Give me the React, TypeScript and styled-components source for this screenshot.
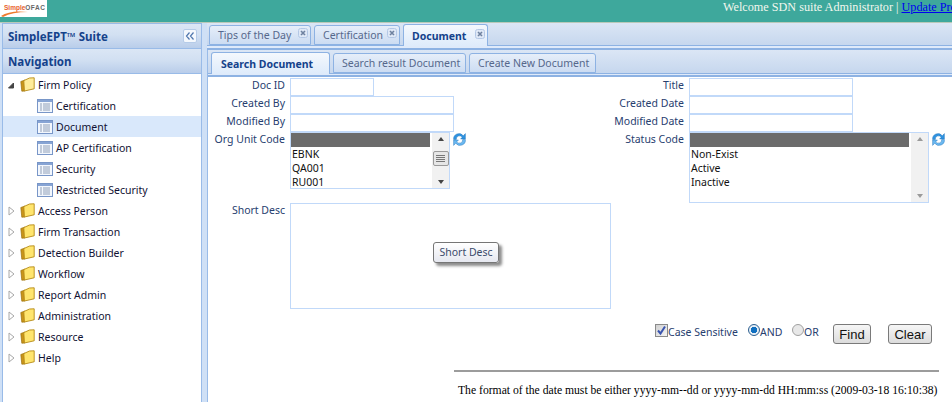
import React from 'react';
import styled, { createGlobalStyle } from 'styled-components';

const Global = createGlobalStyle`
  html, body { margin: 0; padding: 0; height: 402px; overflow: hidden; background: #fff; }
  #root { height: 402px; }
  * { box-sizing: border-box; }
`;
const ui = `"Noto Sans", "Liberation Sans", sans-serif`;

const Page = styled.div`
  width: 952px; height: 402px; display: flex; flex-direction: column; overflow: hidden;
  font-family: ${ui}; font-size: 11px; background: #cfe0f6;
`;
const Header = styled.header`
  height: 23px; flex: none; background: #3ea89c; border-bottom: 1px solid #b9c9b9;
  display: flex; align-items: flex-start; overflow: hidden;
`;
const Logo = styled.div`
  width: 47px; height: 17px; flex: none; background: #fff; position: relative; overflow: hidden;
  font-family: "Liberation Sans", sans-serif; font-size: 6.5px; font-weight: 700; line-height: 16px; padding-left: 4px; white-space: nowrap;
  color: #e8612c;
  span { color: #666; letter-spacing: 0.5px; }
`;
const Swoosh = styled.svg`position: absolute; left: 0; top: 9px; width: 30px; height: 8px;`;
const Welcome = styled.div`
  flex: none; margin-left: 676px; white-space: nowrap;
  font-family: "Liberation Serif", serif; font-size: 12.2px; line-height: 14px; color: #f2f7ee;
  a { color: #0000ee; text-decoration: underline; }
`;
const Body = styled.div`
  flex: 1; min-height: 0; display: flex; padding: 0 0 0 2px; gap: 5px;
`;
const Sidebar = styled.aside`
  width: 200px; flex: none; display: flex; flex-direction: column; background: #fff;
  border: 1px solid #99bbe8; border-bottom: 0;
`;
const PanelTitle = styled.div`
  height: 25px; flex: none; display: flex; align-items: center; justify-content: space-between; padding: 0 4px 0 5px;
  background: linear-gradient(#dbe6f5, #d2e0f2 45%, #b9cdea); border-bottom: 1px solid #99bbe8;
  font-family: ${ui}; font-weight: 700; font-size: 11.5px; color: #15428b;
`;
const Collapse = styled.button`
  width: 14px; height: 14px; padding: 0; border: 1px solid #b5cbe8; border-radius: 2px; background: #f4f8fd;
  display: flex; align-items: center; justify-content: center;
`;
const Tree = styled.ul`
  list-style: none; margin: 0; padding: 0; flex: 1; background: #fff;
`;
const TreeRow = styled.li<{ $sel?: boolean; $leaf?: boolean }>`
  height: 21px; display: flex; align-items: center; padding-left: ${p => (p.$leaf ? 34 : 5)}px; gap: 3px;
  background: ${p => (p.$sel ? '#d9e8fb' : 'transparent')};
  font-size: 10.5px; color: #111133; white-space: nowrap;
`;
const Arrow = styled.svg`width: 8px; height: 10px; flex: none; margin-right: 1px;`;
const Main = styled.main`
  flex: 1; min-width: 0; display: flex; flex-direction: column;
`;
const TabStrip = styled.div<{ $inner?: boolean }>`
  flex: none; display: flex; align-items: flex-end; gap: 3px;
  height: ${p => (p.$inner ? 24 : 23)}px; padding-left: ${p => (p.$inner ? 3 : 2)}px;
  background: linear-gradient(#dbe6f5, #c6d7ee); border-bottom: 1px solid #8db2e3;
`;
const Tab = styled.div<{ $active?: boolean; $w: number; $pad?: number }>`
  width: ${p => p.$w}px; height: ${p => (p.$active ? 22 : 20)}px; display: flex; align-items: center; justify-content: space-between;
  padding: 0 2px 0 ${p => p.$pad ?? 8}px;
  border: 1px solid #8db2e3; border-radius: 3px 3px 0 0; ${p => (p.$active ? 'border-bottom: 0; margin-bottom: -1px;' : '')}
  background: ${p => (p.$active ? 'linear-gradient(#f4f8fd, #deebfb)' : 'linear-gradient(#e6eef9, #ccdcf2)')};
  font-size: 10.5px; white-space: nowrap; color: ${p => (p.$active ? '#15428b' : '#56688c')};
  font-weight: ${p => (p.$active ? 700 : 400)};
`;
const Close = styled.svg`width: 10px; height: 10px; flex: none; margin-top: -4px;`;
const Band = styled.div<{ $h: number }>`flex: none; height: ${p => p.$h}px; background: #dfeafa; border-bottom: 2px solid #8db2e3;`;
const Content = styled.div`
  flex: 1; min-height: 0; background: #fff; border-left: 1px solid #99bbe8; display: flex; flex-direction: column;
`;
const Panel = styled.div`
  flex: 1; position: relative; padding: 1px 0 0 2px; background: #fff; color: #27406f;
`;
const FormGrid = styled.div`
  display: grid; grid-template-columns: 399px 320px;
`;
const FormCol = styled.div`display: flex; flex-direction: column;`;
const Row = styled.div<{ $h?: number }>`
  display: flex; height: ${p => p.$h ?? 18}px; align-items: flex-start; gap: 5px;
`;
const Label = styled.label`
  width: 75px; flex: none; text-align: right; font-size: 10.5px; line-height: 15px; white-space: nowrap;
`;
const Field = styled.div<{ $w: number }>`
  width: ${p => p.$w}px; height: 18px; background: #fff; border: 1px solid #c1d9f9;
`;
const ListWrap = styled.div<{ $w: number; $h: number }>`
  width: ${p => p.$w}px; height: ${p => p.$h}px; flex: none; border: 1px solid #c1d9f9; display: flex; background: #fff;
`;
const Options = styled.div`
  flex: 1; min-width: 0; font-size: 10.5px; line-height: 14px; color: #111; overflow: hidden; margin-right: 2px;
`;
const OptionBlank = styled.div`height: 14px; background: #6b6b6b;`;
const Option = styled.div`padding-left: 1px;`;
const ScrollTrack = styled.div`
  width: 17px; flex: none; background: #f1f1f1; display: flex; flex-direction: column; align-items: center; justify-content: space-between; padding: 4px 0;
`;
const ScrollThumb = styled.div`
  width: 16px; height: 15px; border: 1px solid #9a9a9a; border-radius: 2px; background: #e6e6e6; margin-bottom: 4px;
  display: flex; flex-direction: column; align-items: center; justify-content: center; gap: 1px;
  i { display: block; width: 9px; height: 1px; background: #777; }
`;
const ScrollTip = styled.span<{ $down?: boolean; $pale?: boolean }>`
  width: 0; height: 0; border-left: 3.5px solid transparent; border-right: 3.5px solid transparent;
  ${p => (p.$down ? 'border-top' : 'border-bottom')}: 4px solid ${p => (p.$pale ? '#9a9a9a' : '#444')};
`;
const Refresh = styled.svg`width: 15px; height: 15px; flex: none; margin: 0 0 0 -3px;`;
const TextArea = styled.div`
  width: 321px; height: 106px; flex: none; border: 1px solid #c1d9f9; background: #fff;
`;
const DescRow = styled(Row)`height: 106px; margin-top: 14px;`;
const Tip = styled.div`
  position: absolute; left: 225px; top: 165px; width: 66px; height: 21px; border: 1px solid #767676; border-radius: 3px;
  background: linear-gradient(#fff, #e6e8f0); box-shadow: 3px 3px 3px #8c8c8c;
  font-size: 10.5px; line-height: 18px; text-align: center; color: #3b4a6b;
`;
const Actions = styled.div`
  margin-top: 15px; display: flex; align-items: flex-start; padding-left: 445px; height: 22px;
`;
const Check = styled.span`
  width: 13px; height: 13px; flex: none; border: 1px solid #8a8a8a; background: linear-gradient(135deg, #d0d0d0, #f5f5f5);
  display: flex; align-items: center; justify-content: center;
`;
const ActionText = styled.span<{ $w: number }>`
  width: ${p => p.$w}px; flex: none; font-size: 10.5px; line-height: 17px; color: #27406f; white-space: nowrap;
`;
const Radio = styled.span<{ $on?: boolean }>`
  width: 12px; height: 12px; flex: none; border-radius: 50%; border: 1px solid ${p => (p.$on ? '#2d5f8f' : '#a0a0a0')};
  background: ${p => (p.$on ? 'radial-gradient(circle, #0f6fc0 0 3px, #e6eef6 3.5px)' : '#e8e8e8')};
`;
const Btn = styled.button<{ $w: number; $ml: number }>`
  width: ${p => p.$w}px; margin-left: ${p => p.$ml}px; height: 20px; flex: none; padding: 0;
  border: 1px solid #7a7a7a; border-radius: 3px; background: linear-gradient(#f6f6f6, #dcdcdc);
  font-family: "Liberation Sans", sans-serif; font-size: 13px; color: #111;
`;
const Rule = styled.hr`
  margin: 24px 0 0 244px; width: 485px; height: 2px; border: 0; background: #9c9c9c;
`;
const Note = styled.p`
  margin: 12px 0 0 248px; white-space: nowrap; font-family: "Liberation Serif", serif; font-size: 11.65px; line-height: 14px; color: #000;
`;

const Folder = ({ open }: { open?: boolean }) => (
  <svg width="15" height="15" viewBox="0 0 15 15" style={{ flex: 'none' }}>
    <path d="M.8 4.5 L5 3 V14 L1.8 14.2 Z" fill="#c9941a" stroke="#9a7110" strokeWidth=".7" />
    <path d="M3.8 3.6 L9.5 1 L14.2 .8 V11.8 L4.4 14 Z" fill={open ? '#ffec9a' : '#ffe56e'} stroke="#b58a15" strokeWidth=".9" />
  </svg>
);
const Doc = () => (
  <svg width="16" height="14" viewBox="0 0 16 14" style={{ flex: 'none' }}>
    <rect x=".5" y=".5" width="15" height="13" fill="#f3f7fd" stroke="#7896c8" />
    <rect x="1" y="1" width="14" height="2" fill="#87a4d4" />
    <path d="M3 5h2M6 5h7M3 7h2M6 7h7M3 9h2M6 9h7M3 11h2M6 11h7" stroke="#8f9fb8" />
  </svg>
);
const ClosedArrow = () => (
  <Arrow viewBox="0 0 8 10"><path d="M1 1 L6 5 L1 9 Z" fill="#fff" stroke="#a8a8a8" /></Arrow>
);
const OpenArrow = () => (
  <Arrow viewBox="0 0 8 10"><path d="M.5 8 H5.5 V3 Z" fill="#444" stroke="#444" /></Arrow>
);
const CloseIcon = () => (
  <Close viewBox="0 0 10 10">
    <rect x=".5" y=".5" width="9" height="9" rx="2" fill="#dfe8f6" stroke="#b4c8e6" />
    <path d="M3 3 L7 7 M7 3 L3 7" stroke="#6f82a0" strokeWidth="1.6" />
  </Close>
);
const RefreshIcon = () => (
  <Refresh viewBox="0 0 14 14">
    <path d="M1.5 7 A5 5 0 0 1 10.5 3.5 L12.5 1.5 V6.5 H8 L9.5 5 A3 3 0 0 0 4 7 Z" fill="#2f93e0" stroke="#1c6fb8" strokeWidth=".4" />
    <path d="M12.5 7 A5 5 0 0 1 3.5 10.5 L1.5 12.5 V7.5 H6 L4.5 9 A3 3 0 0 0 10 7 Z" fill="#6ab8f0" stroke="#1c6fb8" strokeWidth=".4" />
  </Refresh>
);

const ListBox = ({ w, h, items, thumb }: { w: number; h: number; items: string[]; thumb?: boolean }) => (
  <ListWrap $w={w} $h={h}>
    <Options>
      <OptionBlank />
      {items.map(i => <Option key={i}>{i}</Option>)}
    </Options>
    <ScrollTrack>
      <ScrollTip $pale={!thumb} />
      {thumb && <ScrollThumb><i /><i /><i /><i /></ScrollThumb>}
      <ScrollTip $down $pale={!thumb} />
    </ScrollTrack>
  </ListWrap>
);

const groups = ['Access Person', 'Firm Transaction', 'Detection Builder', 'Workflow', 'Report Admin', 'Administration', 'Resource', 'Help'];
const leaves = ['Certification', 'Document', 'AP Certification', 'Security', 'Restricted Security'];

export default function App() {
  return (
    <Page>
      <Global />
      <Header>
        <Logo>
          Simple<span>OFAC</span>
          <Swoosh viewBox="0 0 30 8"><path d="M1 7 Q10 1 28 3 Q12 3 3 8 Z" fill="#ee7a2c" /></Swoosh>
        </Logo>
        <Welcome>Welcome SDN suite Administrator | <a href="#u">Update Profile</a></Welcome>
      </Header>
      <Body>
        <Sidebar>
          <PanelTitle>
            SimpleEPT™ Suite
            <Collapse aria-label="Collapse">
              <svg width="10" height="8" viewBox="0 0 10 8"><path d="M4.5 .5 L1.5 4 L4.5 7.5 M8.5 .5 L5.5 4 L8.5 7.5" fill="none" stroke="#4f76ad" strokeWidth="1.2" /></svg>
            </Collapse>
          </PanelTitle>
          <PanelTitle>Navigation</PanelTitle>
          <Tree>
            <TreeRow><OpenArrow /><Folder open />Firm Policy</TreeRow>
            {leaves.map(l => (
              <TreeRow key={l} $leaf $sel={l === 'Document'}><Doc />{l}</TreeRow>
            ))}
            {groups.map(g => (
              <TreeRow key={g}><ClosedArrow /><Folder />{g}</TreeRow>
            ))}
          </Tree>
        </Sidebar>
        <Main>
          <TabStrip>
            <Tab $w={102}>Tips of the Day<CloseIcon /></Tab>
            <Tab $w={86}>Certification<CloseIcon /></Tab>
            <Tab $w={85} $active>Document<CloseIcon /></Tab>
          </TabStrip>
          <Band $h={4} />
          <Content>
            <TabStrip $inner>
              <Tab $w={119} $active $pad={9}>Search Document</Tab>
              <Tab $w={133} $pad={8}>Search result Document</Tab>
              <Tab $w={127} $pad={8}>Create New Document</Tab>
            </TabStrip>
            <Band $h={3} />
            <Panel>
              <FormGrid>
                <FormCol>
                  <Row><Label>Doc ID</Label><Field $w={84} /></Row>
                  <Row><Label>Created By</Label><Field $w={164} /></Row>
                  <Row><Label>Modified By</Label><Field $w={164} /></Row>
                  <Row $h={57}>
                    <Label>Org Unit Code</Label>
                    <ListBox w={160} h={57} items={['EBNK', 'QA001', 'RU001']} thumb />
                    <RefreshIcon />
                  </Row>
                </FormCol>
                <FormCol>
                  <Row><Label>Title</Label><Field $w={164} /></Row>
                  <Row><Label>Created Date</Label><Field $w={164} /></Row>
                  <Row><Label>Modified Date</Label><Field $w={164} /></Row>
                  <Row $h={57}>
                    <Label>Status Code</Label>
                    <ListBox w={240} h={71} items={['Non-Exist', 'Active', 'Inactive']} />
                    <RefreshIcon />
                  </Row>
                </FormCol>
              </FormGrid>
              <DescRow><Label>Short Desc</Label><TextArea /></DescRow>
              <Tip>Short Desc</Tip>
              <Actions>
                <Check>
                  <svg width="11" height="11" viewBox="0 0 11 11"><path d="M2 5.5 L4.5 8.5 L9 1.5" fill="none" stroke="#3a55b0" strokeWidth="2" /></svg>
                </Check>
                <ActionText $w={80}>Case Sensitive</ActionText>
                <Radio $on />
                <ActionText $w={32}>AND</ActionText>
                <Radio />
                <ActionText $w={14}>OR</ActionText>
                <Btn $w={38} $ml={15}>Find</Btn>
                <Btn $w={44} $ml={17}>Clear</Btn>
              </Actions>
              <Rule />
              <Note>The format of the date must be either yyyy-mm--dd or yyyy-mm-dd HH:mm:ss (2009-03-18 16:10:38)</Note>
            </Panel>
          </Content>
        </Main>
      </Body>
    </Page>
  );
}
